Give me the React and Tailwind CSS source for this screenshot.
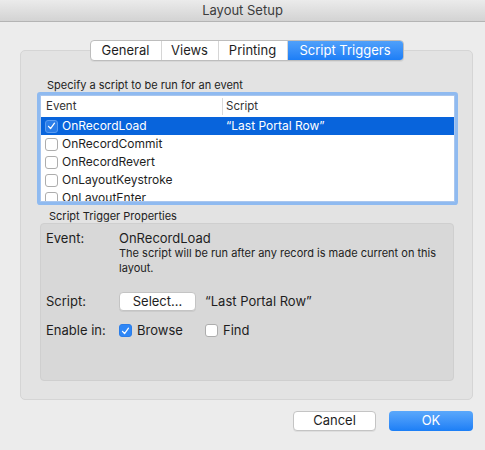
import React from "react";

const Check = ({ className = "" }) => (
  <svg viewBox="0 0 14 14" className={className} fill="none">
    <path d="M3.2 7.4 L5.8 10.2 L10.8 3.4" stroke="white" strokeWidth="1.6" strokeLinecap="round" strokeLinejoin="round" />
  </svg>
);

const Box = ({ checked, inRow }) => {
  if (checked) {
    return (
      <span
        className={
          "w-[13px] h-[13px] rounded-[3px] flex items-center justify-center shrink-0 " +
          (inRow ? "bg-[#2a7de9] border border-[#5b9cf0]" : "bg-[#2e86f6] border border-[#2a7de9]")
        }
      >
        <Check className="w-[12px] h-[12px]" />
      </span>
    );
  }
  return <span className="w-[13px] h-[13px] rounded-[3px] bg-white border border-[#adadad] shrink-0" />;
};

const events = [
  { name: "OnRecordLoad", script: "“Last Portal Row”", on: true },
  { name: "OnRecordCommit" },
  { name: "OnRecordRevert" },
  { name: "OnLayoutKeystroke" },
  { name: "OnLayoutEnter" },
];

const tabs = [
  { label: "General", w: "w-[71px]" },
  { label: "Views", w: "w-[57px]" },
  { label: "Printing", w: "w-[69px]" },
  { label: "Script Triggers", w: "w-[115px]", active: true },
];

export default function App() {
  return (
    <div className="w-[485px] h-[450px] bg-[#ececec] flex flex-col overflow-hidden text-[#1e1e1e] font-['Inter','Noto_Sans',sans-serif]">
      {/* title bar */}
      <div className="h-[22px] shrink-0 bg-linear-to-b from-[#ebebeb] to-[#d3d3d3] border-b border-[#b4b4b4] flex items-center justify-center text-[13px] text-[#3c3c3c]">
        Layout Setup
      </div>

      {/* tab panel */}
      <div className="mt-[28px] ml-[20px] mr-[12px] h-[350px] bg-[#e3e3e3] border border-[#d5d5d5] rounded-[5px] flex flex-col">
        <div className="-mt-[11px] flex justify-center">
          <div className="flex h-[21px] rounded-[4px] border border-[#bdbdbd] bg-white shadow-[0_1px_0_rgba(0,0,0,0.05)] overflow-hidden">
            {tabs.map((t, i) => (
              <div
                key={t.label}
                className={
                  t.w +
                  " flex items-center justify-center text-[13px] leading-none " +
                  (t.active
                    ? "bg-linear-to-b from-[#4fa0fa] to-[#1c7ef6] text-white"
                    : "text-[#1e1e1e] " + (i < tabs.length - 1 ? "border-r border-[#d6d6d6]" : ""))
                }
              >
                {t.label}
              </div>
            ))}
          </div>
        </div>

        <div className="mt-[17px] ml-[26px] text-[11px] leading-[15px] text-[#222]">
          Specify a script to be run for an event
        </div>

        {/* event list */}
        <div className="mt-[2px] ml-[19px] w-[415px] h-[107px] bg-white border border-[#a9c6ee] ring-[3px] ring-[#8fbaf0] rounded-[1px] overflow-hidden flex flex-col">
          <div className="h-[21px] shrink-0 flex items-center text-[11.5px] text-[#333]">
            <div className="w-[182px] pl-[5px] border-r border-[#dadada] h-[17px] flex items-center">Event</div>
            <div className="pl-[3px]">Script</div>
          </div>
          {events.map((e) => (
            <div
              key={e.name}
              className={
                "h-[18px] shrink-0 flex items-center text-[12px] " +
                (e.on ? "bg-[#0864dc] text-white" : "text-[#1e1e1e]")
              }
            >
              <div className="w-[182px] pl-[4px] flex items-center gap-[4px]">
                <Box checked={e.on} inRow />
                <span>{e.name}</span>
              </div>
              <div className="pl-[3px] text-[12px]">{e.script}</div>
            </div>
          ))}
        </div>

        <div className="mt-[7px] ml-[28px] text-[11px] leading-[14px] text-[#222]">Script Trigger Properties</div>

        {/* properties */}
        <div className="ml-[19px] w-[414px] h-[158px] bg-[#d8d8d8] border border-[#cfcfcf] rounded-[4px] pt-[6px] pl-[5px] flex flex-col">
          <div className="flex">
            <div className="w-[73px] text-[13px] leading-[16px]">Event:</div>
            <div className="flex flex-col">
              <div className="text-[13px] leading-[16px]">OnRecordLoad</div>
              <div className="w-[325px] text-[11px] leading-[14.5px] text-[#222]">
                The script will be run after any record is made current on this layout.
              </div>
            </div>
          </div>

          <div className="mt-[17px] flex items-center h-[19px]">
            <div className="w-[73px] text-[13px]">Script:</div>
            <div className="w-[77px] h-[19px] bg-white border border-[#c4c4c4] rounded-[4px] shadow-[0_1px_0_rgba(0,0,0,0.06)] flex items-center justify-center text-[13px]">
              Select…
            </div>
            <div className="ml-[9px] text-[13px]">“Last Portal Row”</div>
          </div>

          <div className="mt-[10px] flex items-center h-[19px]">
            <div className="w-[73px] text-[13px]">Enable in:</div>
            <div className="w-[86px] flex items-center gap-[5px] text-[13px]">
              <Box checked />
              <span>Browse</span>
            </div>
            <div className="flex items-center gap-[5px] text-[13px]">
              <Box />
              <span>Find</span>
            </div>
          </div>
        </div>
      </div>

      {/* dialog buttons */}
      <div className="mt-[11px] mr-[12px] flex justify-end gap-[13px]">
        <div className="w-[83px] h-[20px] bg-white border border-[#c4c4c4] rounded-[4px] shadow-[0_1px_0_rgba(0,0,0,0.06)] flex items-center justify-center text-[13px]">
          Cancel
        </div>
        <div className="w-[84px] h-[20px] bg-linear-to-b from-[#5aa8fb] to-[#1a7ef6] rounded-[4px] flex items-center justify-center text-[13px] text-white">
          OK
        </div>
      </div>
    </div>
  );
}
